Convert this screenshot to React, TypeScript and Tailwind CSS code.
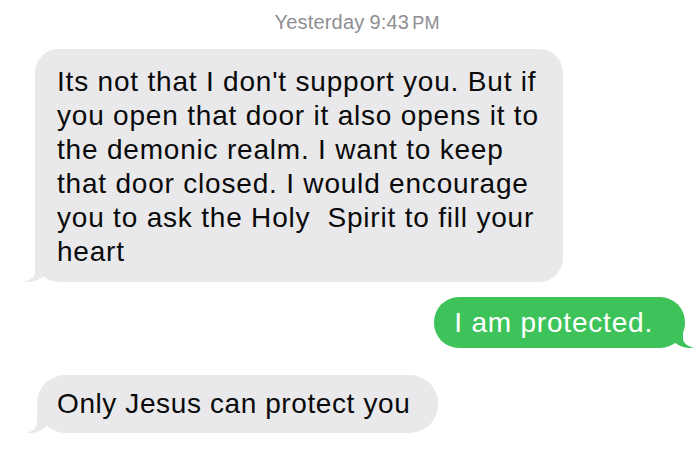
import React from "react";

function TailLeft() {
  return (
    <svg
      className="absolute left-[-11px] bottom-0"
      width="24"
      height="22"
      viewBox="0 0 24 22"
    >
      <path d="M11 0 L11 12 C11 17 7 20 0 22 C7 22.5 14 21 20 16 L24 0 Z" fill="#e9e9eb" />
    </svg>
  );
}

function TailRight() {
  return (
    <svg
      className="absolute right-[-9px] bottom-0"
      width="24"
      height="22"
      viewBox="0 0 24 22"
    >
      <path d="M13 0 L13 12 C13 17 17 20 24 22 C17 22.5 10 21 4 16 L0 0 Z" fill="#3ec35b" />
    </svg>
  );
}

const lines = [
  "Its not that I don't support you. But if",
  "you open that door it also opens it to",
  "the demonic realm. I want to keep",
  "that door closed. I would encourage",
  "you to ask the Holy\u00a0 Spirit to fill your",
  "heart",
];

export default function App() {
  return (
    <div
      className="w-[700px] h-[453px] bg-white overflow-hidden flex flex-col"
      style={{ fontFamily: '"Liberation Sans", Arial, sans-serif' }}
    >
      <div className="pt-[11px] flex justify-center items-baseline text-[#8e8e93] text-[20px] leading-[22px] tracking-[0.2px] pl-[14px]">
        <span>Yesterday</span>
        <span className="ml-[5px]">9:43</span>
        <span className="ml-[3px] text-[18px]">PM</span>
      </div>

      <div className="mt-[15px] pl-[35px] flex">
        <div className="relative bg-[#e9e9eb] rounded-[24px] w-[528px] pl-[22px] pt-[16px] pb-[13px] text-[28px] leading-[34px] tracking-[0.8px] text-[#0a0a0a]">
          <TailLeft />
          <div className="relative">
            {lines.map((l, i) => (
              <div key={i} className="whitespace-nowrap">
                {l}
              </div>
            ))}
          </div>
        </div>
      </div>

      <div className="mt-[15px] pr-[15px] flex justify-end">
        <div className="relative bg-[#3ec35b] rounded-[25px] h-[51px] pl-[20px] pr-[32px] flex items-center text-white text-[28px] tracking-[0.8px]">
          <TailRight />
          <span className="relative">I am protected.</span>
        </div>
      </div>

      <div className="mt-[27px] pl-[37px] flex">
        <div className="relative bg-[#e9e9eb] rounded-[28px] h-[58px] pl-[20px] pr-[28px] flex items-center text-[28px] tracking-[0.6px] text-[#0a0a0a]">
          <TailLeft />
          <span className="relative">Only Jesus can protect you</span>
        </div>
      </div>
    </div>
  );
}
